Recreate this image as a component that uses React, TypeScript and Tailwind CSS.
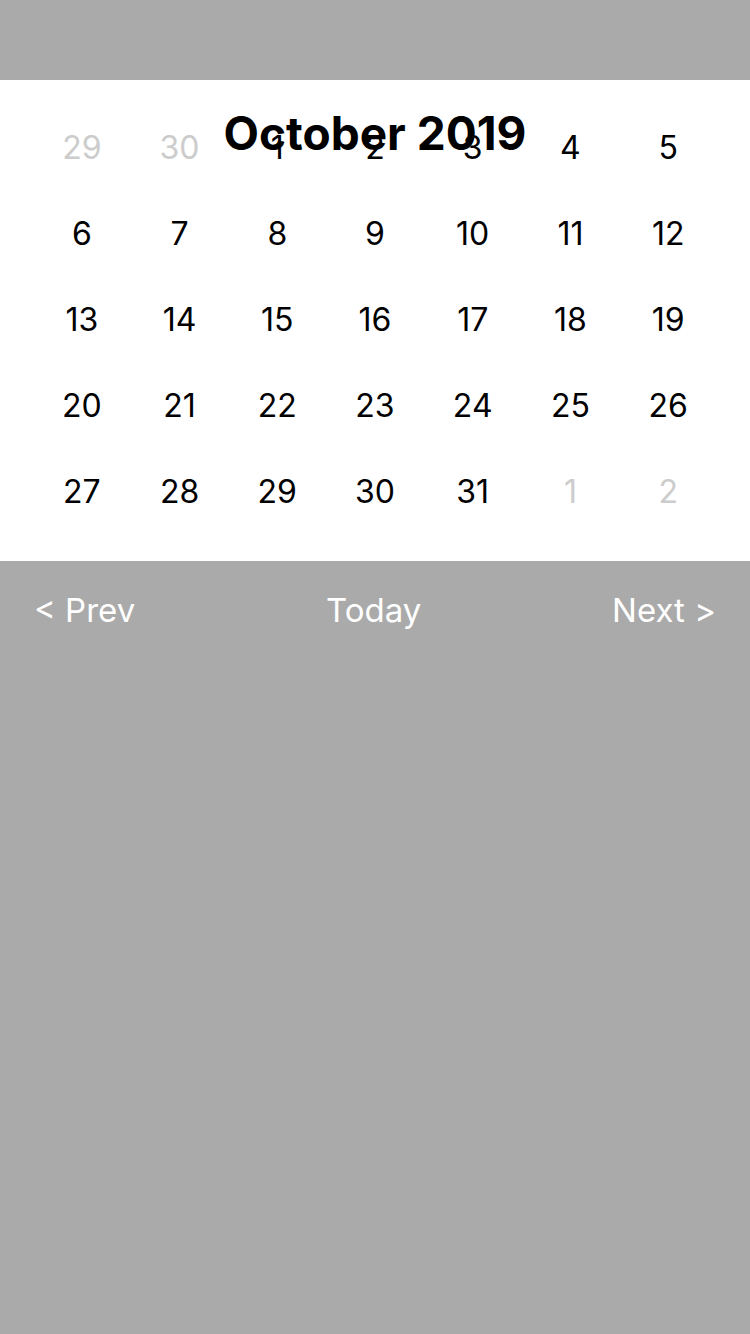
import React from "react";

const rows: { n: number; faded?: boolean }[][] = [
  [{ n: 29, faded: true }, { n: 30, faded: true }, { n: 1 }, { n: 2 }, { n: 3 }, { n: 4 }, { n: 5 }],
  [6, 7, 8, 9, 10, 11, 12].map((n) => ({ n })),
  [13, 14, 15, 16, 17, 18, 19].map((n) => ({ n })),
  [20, 21, 22, 23, 24, 25, 26].map((n) => ({ n })),
  [{ n: 27 }, { n: 28 }, { n: 29 }, { n: 30 }, { n: 31 }, { n: 1, faded: true }, { n: 2, faded: true }],
];

export default function App() {
  return (
    <div
      className="w-[750px] h-[1334px] bg-[#aaaaaa] flex flex-col"
      style={{ fontFamily: "Inter, 'Noto Sans', sans-serif" }}
    >
      <div className="h-[80px]" />
      <div className="relative h-[481px] bg-white pt-[25px] px-[33px]">
        <div className="grid grid-cols-7">
          {rows.flat().map((d, i) => (
            <div
              key={i}
              className={`h-[86px] flex items-center justify-center text-[32px] ${
                d.faded ? "text-[#cccccc]" : "text-black"
              }`}
            >
              {d.n}
            </div>
          ))}
        </div>
        <div className="absolute left-0 right-0 top-[25px] text-center text-[46px] font-bold text-black leading-[56px]">
          October 2019
        </div>
      </div>
      <div className="flex items-center justify-between h-[100px] px-[34px] text-white text-[33px]">
        <span>&lt; Prev</span>
        <span>Today</span>
        <span>Next &gt;</span>
      </div>
    </div>
  );
}
